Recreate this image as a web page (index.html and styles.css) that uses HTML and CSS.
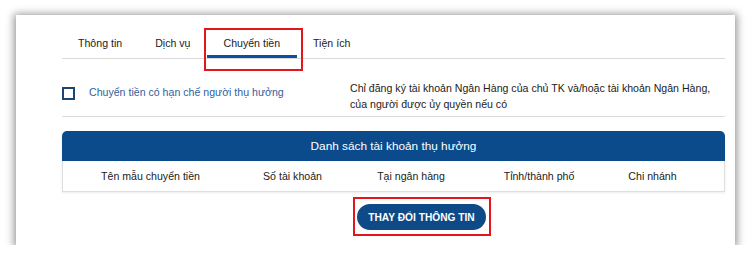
FILE: index.html
```html
<!DOCTYPE html>
<html lang="vi">
<head>
    <meta charset="UTF-8">
    <meta name="viewport" content="width=device-width, initial-scale=1.0">
    <title>Chuyển tiền</title>
    <link rel="stylesheet" href="styles.css">
</head>
<body>
    <div class="card">
        <div class="tabs">
            <div class="tab">Thông tin</div>
            <div class="tab">Dịch vụ</div>
            <div class="tab active">Chuyển tiền</div>
            <div class="tab">Tiện ích</div>
        </div>

        <div class="option-row">
            <label class="option">
                <span class="checkbox"></span>
                <span class="option-label">Chuyển tiền có hạn chế người thụ hưởng</span>
            </label>
            <div class="option-note">
                Chỉ đăng ký tài khoản Ngân Hàng của chủ TK và/hoặc tài khoản Ngân Hàng,<br>
                của người được ủy quyền nếu có
            </div>
        </div>

        <div class="table">
            <div class="table-title">Danh sách tài khoản thụ hưởng</div>
            <div class="table-head">
                <div>Tên mẫu chuyển tiền</div>
                <div>Số tài khoản</div>
                <div>Tại ngân hàng</div>
                <div>Tỉnh/thành phố</div>
                <div>Chi nhánh</div>
            </div>
        </div>

        <div class="actions">
            <button class="btn-primary">THAY ĐỔI THÔNG TIN</button>
        </div>

        <div class="highlight highlight-tab"></div>
        <div class="highlight highlight-btn"></div>
    </div>
</body>
</html>
```

FILE: styles.css
```css
body {
    margin: 0;
    padding: 15px 16px 0 16px;
    background: #fff;
    font-family: "Liberation Sans", Arial, sans-serif;
    font-size: 10.6px;
    color: #2b2b2b;
}
.card {
    position: relative;
    width: 719px;
    height: 230px;
    box-sizing: border-box;
    padding: 13px 10px 0 46px;
    background: #fff;
    box-shadow: 0 1px 8px 2px rgba(0,0,0,0.42);
}
.tabs {
    display: flex;
    border-bottom: 1px solid #d9d9d9;
}
.tab {
    padding: 3px 16.5px 0 16.5px;
    line-height: 24px;
    border-bottom: 3px solid transparent;
    color: #222;
}
.tab:first-child {
    padding-left: 16px;
}
.tab.active {
    border-bottom-color: #0b4fa3;
}
.option-row {
    display: flex;
    padding: 21px 0 4px 0;
    border-bottom: 1px solid #dcdcdc;
}
.option {
    width: 288px;
    display: flex;
    align-items: center;
    gap: 14px;
    margin-top: 4px;
    height: 16px;
}
.checkbox {
    width: 9px;
    height: 9px;
    border: 2px solid #1c4577;
    margin-top: 3px;
}
.option-label {
    color: #2f5f9e;
    line-height: 16px;
}
.option-note {
    line-height: 16px;
    color: #222;
}
.table {
    margin-top: 14px;
    box-shadow: 0 1px 2px rgba(0,0,0,0.08);
}
.table-title {
    height: 30px;
    line-height: 30px;
    background: #0b4b8c;
    color: #fff;
    text-align: center;
    font-size: 11.8px;
    border-radius: 5px 5px 0 0;
}
.table-head {
    display: grid;
    grid-template-columns: 175px 109px 128px 128px 99px;
    height: 30px;
    line-height: 30px;
    border: 1px solid #dedede;
    border-top: none;
    text-align: center;
    color: #222;
}
.actions {
    margin-top: 12px;
    padding-left: 295px;
}
.btn-primary {
    width: 129px;
    height: 26px;
    border: none;
    border-radius: 13px;
    background: #0d4a87;
    color: #fff;
    font-family: "Liberation Sans", Arial, sans-serif;
    font-size: 10.2px;
    font-weight: bold;
    padding: 0;
}
.highlight {
    position: absolute;
    border: 2px solid #e3161c;
    box-sizing: border-box;
}
.highlight-tab {
    left: 188px;
    top: 13px;
    width: 99px;
    height: 43px;
}
.highlight-btn {
    left: 337px;
    top: 182px;
    width: 138px;
    height: 39px;
}
```
